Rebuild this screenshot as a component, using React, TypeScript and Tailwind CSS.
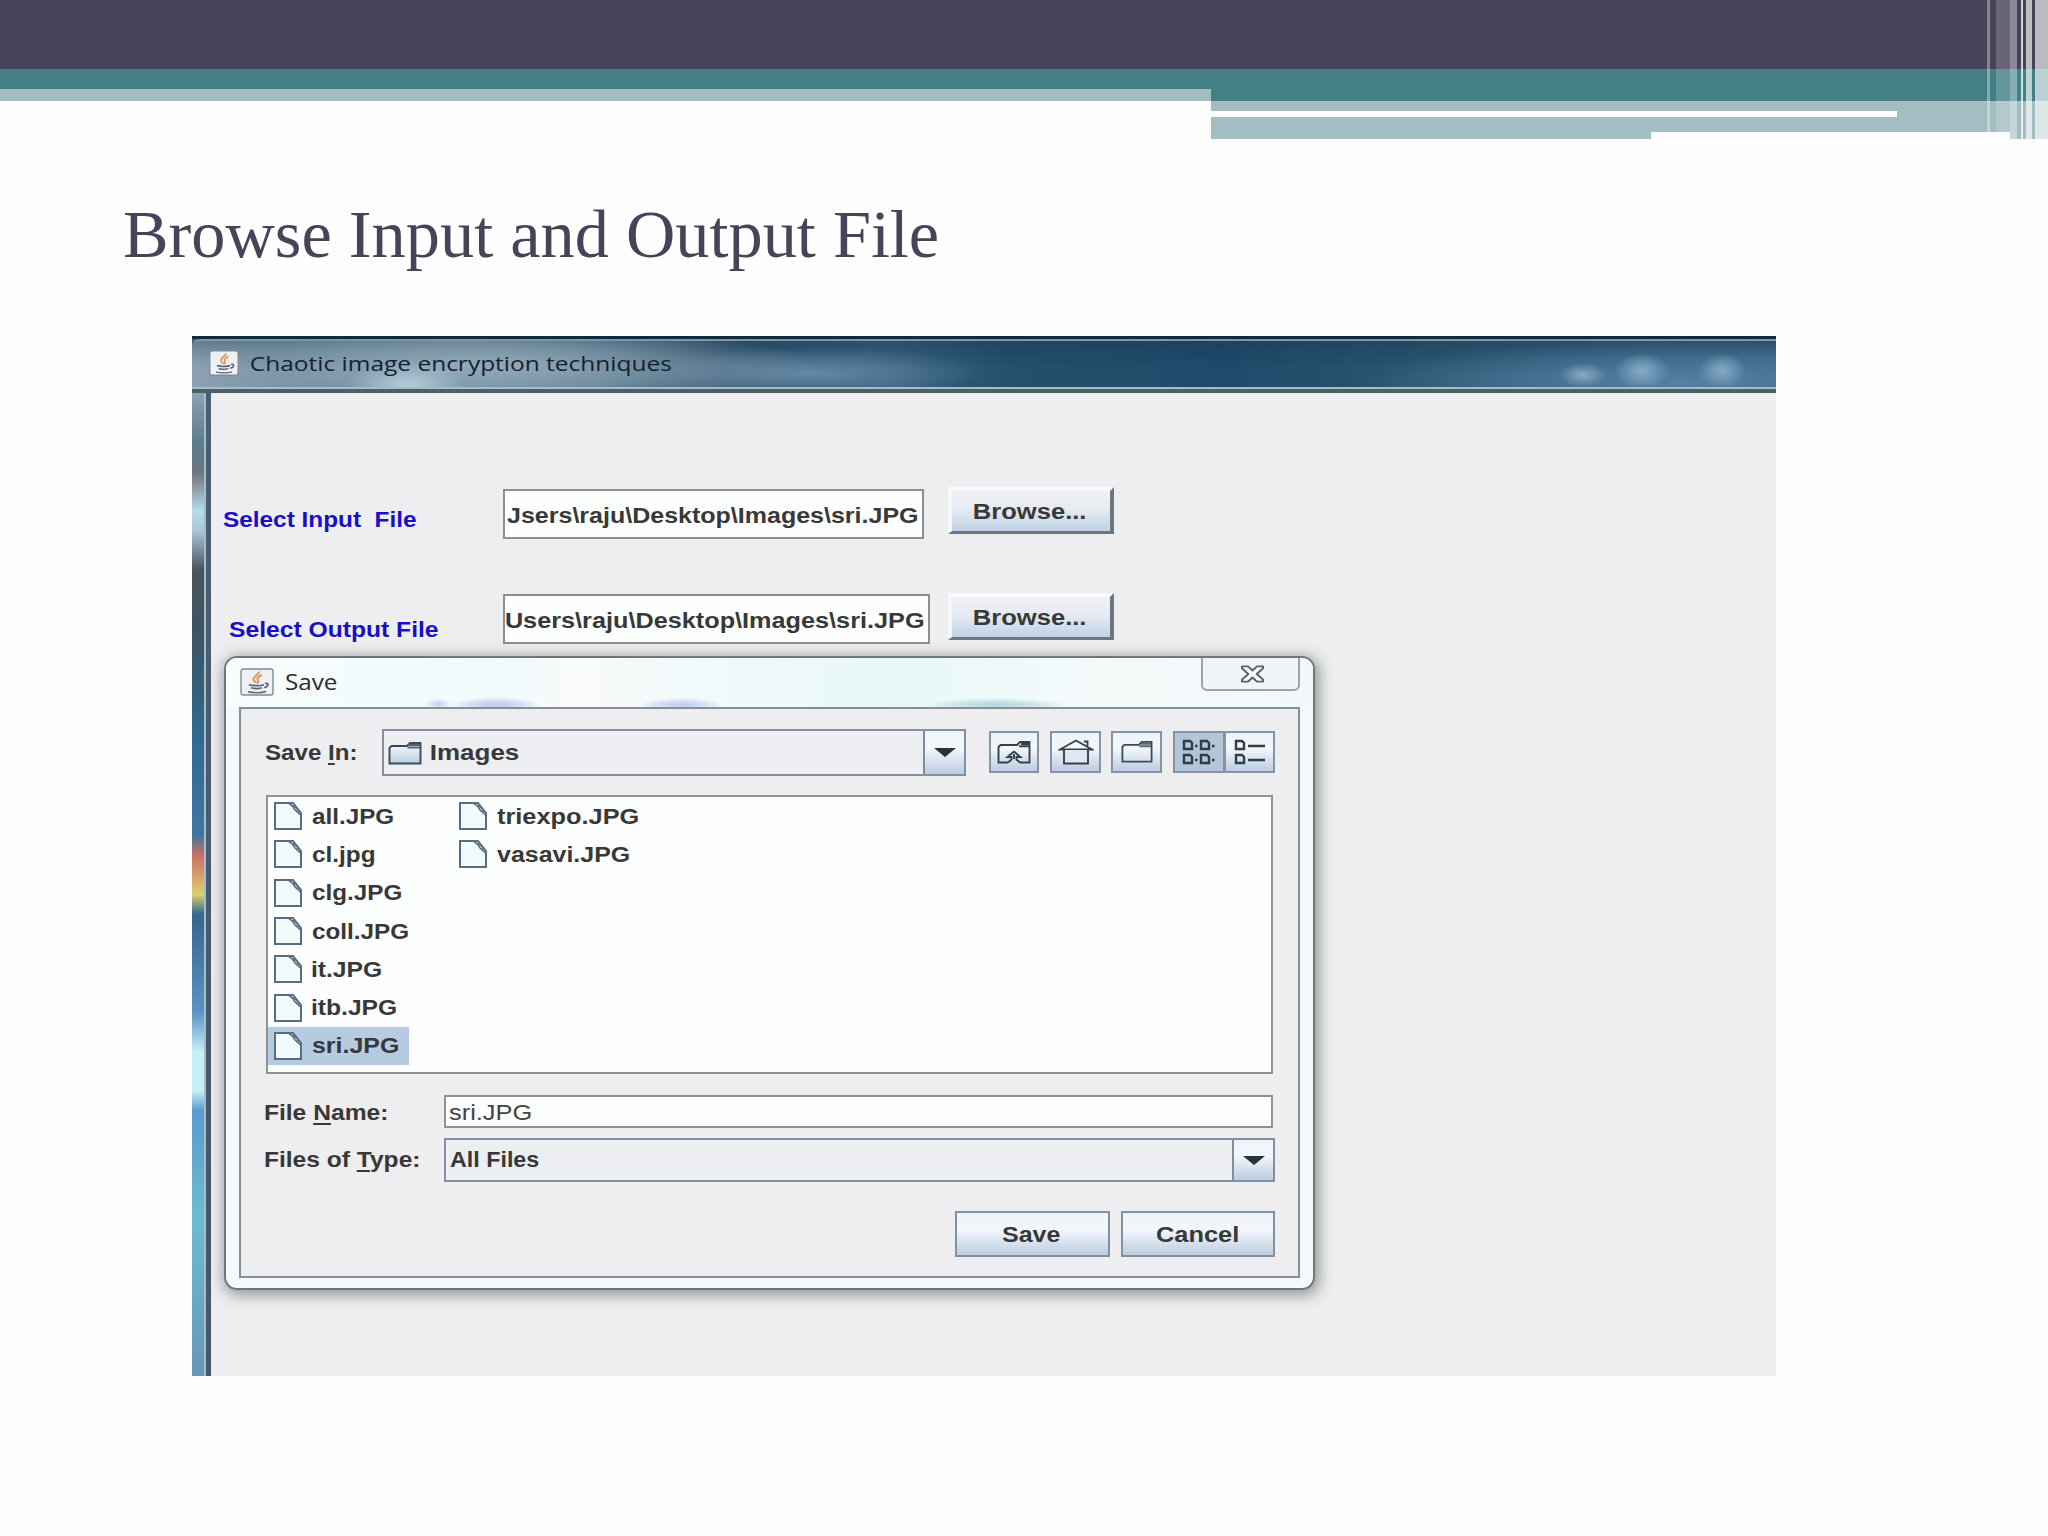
import { useLayoutEffect, useRef } from "react";
import type { ReactNode } from "react";

type FitProps = { text: string; w: number; className?: string; mnemonic?: number };

/** One line of text whose glyphs are stretched to span exactly `w` pixels. */
function Fit({ text, w, className = "", mnemonic = -1 }: FitProps) {
  const ref = useRef<HTMLSpanElement>(null);
  useLayoutEffect(() => {
    const el = ref.current;
    const ctx = document.createElement("canvas").getContext("2d");
    if (!el || !ctx) return;
    const cs = getComputedStyle(el);
    ctx.font = `${cs.fontWeight} ${cs.fontSize} ${cs.fontFamily}`;
    const m = ctx.measureText(text);
    const left = -m.actualBoundingBoxLeft;
    const ink = m.actualBoundingBoxRight - left;
    const s = w / ink;
    el.style.transform = `translateX(${-left * s}px) scaleX(${s})`;
  }, [text, w]);
  return (
    <span className={`block shrink-0 whitespace-pre ${className}`} style={{ width: w }}>
      <span ref={ref} className="inline-block origin-left">
        {mnemonic < 0 ? (
          text
        ) : (
          <>
            {text.slice(0, mnemonic)}
            <span className="underline decoration-2 underline-offset-[3px]">{text[mnemonic]}</span>
            {text.slice(mnemonic + 1)}
          </>
        )}
      </span>
    </span>
  );
}

function JavaIcon({ className }: { className: string }) {
  return (
    <svg className={className} viewBox="0 0 34 28" preserveAspectRatio="none" fill="none">
      <rect x="1" y="1" width="32" height="26" rx="2.5" fill="#eef1f3" stroke="#7d8b93" strokeWidth="1.4" />
      <path d="M19 3.5c1 3-6 4.600-5.500 8 .2 1.500 2.500 2.500 2.500 3.800M22 7c-3 1.200-5.500 3-4.200 5.200.8 1.400.6 2-.6 3" stroke="#dd9a5c" strokeWidth="2" />
      <path d="M9 16.800c3 1.200 12 1.200 15 0M11 19.800c3 1 8.500 1 11 0M25 15.500c4-1 4 3-.8 4.200" stroke="#5d5f74" strokeWidth="1.700" />
      <path d="M8 23.800c5 1.200 14 1.200 18-.3" stroke="#5a6a78" strokeWidth="1.500" />
    </svg>
  );
}

function FileIcon() {
  return (
    <svg className="h-7 w-7 shrink-0" viewBox="0 0 28 28" fill="none">
      <path d="M1 1h18l8 10v16H1z" fill="#f1fafd" stroke="#5a6d80" strokeWidth="2" />
      <path d="M15 1.500l3.500 2.500 2.500 4 5.500 5" stroke="#5a6d80" strokeWidth="1.600" />
      <path d="M19 3l2 5 5 2z" fill="#b9c8d3" stroke="#5a6d80" />
    </svg>
  );
}

function FolderIcon({ className, filled = false }: { className: string; filled?: boolean }) {
  return (
    <svg className={className} viewBox="0 0 34 23" preserveAspectRatio="none" fill="none">
      <defs>
        <linearGradient id="folder" x1="0" y1="0" x2="0" y2="1">
          <stop offset="0" stopColor="#f8fbfe" />
          <stop offset="1" stopColor="#b9cde0" />
        </linearGradient>
      </defs>
      <path d="M1.500 6l2-2H19l3-3h10.500v20.500H1.500z" fill={filled ? "url(#folder)" : "none"} stroke="#3c4a57" strokeWidth="1.900" />
      <path d="M19.500 5.500H32M21 3h11" stroke="#55636f" strokeWidth="1.900" />
    </svg>
  );
}

function UpFolderIcon() {
  return (
    <svg className="h-[23px] w-[34px]" viewBox="0 0 34 23" fill="none" stroke="#34424e" strokeWidth="1.900">
      <path d="M11 21.500H1.500V6l2-2H20l3-3h9.500v20.500H23M22 5.200h10M24 3h8" />
      <path d="M17 10.500l-6.500 5.500h4v2.500l-3.500 3M17 10.500l6.500 5.500h-4v2.500l3.500 3" />
      <path d="M17 13v5" />
    </svg>
  );
}

function HomeIcon() {
  return (
    <svg className="h-[26px] w-[36px]" viewBox="0 0 36 26" fill="none" stroke="#34424e" strokeWidth="1.900">
      <path d="M2 10.500L18 1.500l16 9zM26 2.500h3.500V7" />
      <path d="M6 11v13.500h24V11" fill="#dfe8f1" />
    </svg>
  );
}

function GridIcon() {
  return (
    <svg className="h-[27px] w-[34px]" viewBox="0 0 34 27" fill="none" stroke="#2f3d49" strokeWidth="2.400">
      <path d="M2 2h6l2 2v6H2zM19 2h6l2 2v6h-8zM2 16h6l2 2v6H2zM19 16h6l2 2v6h-8z" />
      <path d="M13 7h2.500M30 7h2.500M13 21h2.500M30 21h2.500" />
    </svg>
  );
}

function ListIcon() {
  return (
    <svg className="h-[27px] w-[32px]" viewBox="0 0 32 27" fill="none" stroke="#2f3d49" strokeWidth="2.400">
      <path d="M2 2h6l2 2v6H2zM2 16h6l2 2v6H2zM14 7h17M14 21h17" />
    </svg>
  );
}

function ToolButton({ children, className = "" }: { children: ReactNode; className?: string }) {
  return (
    <div className={`flex h-[42px] items-center justify-center border-2 border-[#8593a6] ${className}`}>{children}</div>
  );
}

const METAL = "bg-linear-to-b from-[#eef3f8] via-[#f3f7fb] via-40% to-[#bccde0]";

function Arrow({ className = "" }: { className?: string }) {
  return (
    <div className={`flex items-center justify-center border-l-2 border-[#7f8da2] ${METAL} ${className}`}>
      <svg className="h-[9px] w-[22px]" viewBox="0 0 22 10" preserveAspectRatio="none">
        <path d="M0 0h22L11 10z" fill="#26323c" />
      </svg>
    </div>
  );
}

function BrowseButton({ className = "" }: { className?: string }) {
  return (
    <div
      className={`h-[47px] w-[166px] border-t-4 border-r-4 border-b-3 border-l-4 border-t-[#f9fafb] border-r-[#6b7680] border-b-[#6b7680] border-l-[#f5f7f9] bg-linear-to-b from-[#f0f1f4] via-[#e6ebf2] via-45% to-[#bfd2e5] pl-[22px] ${className}`}
    >
      <Fit text="Browse..." w={111} className="leading-[41px]" />
    </div>
  );
}

function FileRow({ name, w, selected = false }: { name: string; w: number; selected?: boolean }) {
  return (
    <div className={`flex h-[38.3px] items-center gap-[10px] pl-1.5 ${selected ? "w-[141px] bg-[#b6cae2]" : ""}`}>
      <FileIcon />
      <Fit text={name} w={w} className="pt-px leading-[36px]" />
    </div>
  );
}

const FILES: [string, number][] = [
  ["all.JPG", 81],
  ["cl.jpg", 62],
  ["clg.JPG", 89],
  ["coll.JPG", 96],
  ["it.JPG", 69],
  ["itb.JPG", 84],
  ["sri.JPG", 86],
];

function SlideBanner() {
  return (
    <header className="relative h-[139px] w-full overflow-hidden bg-[#fefefe]">
      <div className="h-[69px] bg-[#464459]" />
      <div className="flex h-[70px]">
        <div className="w-[1211px]">
          <div className="h-5 bg-[#438086]" />
          <div className="h-3 bg-[#a3bec2]" />
        </div>
        <div className="flex-1 bg-[#a3bec2]">
          <div className="h-8 bg-[#438086]" />
          <div className="mt-2.5 h-1.5 w-[686px] bg-white" />
          <div className="mt-[15px] ml-[440px] h-[7px] w-[359px] bg-white" />
        </div>
      </div>
      <div className="absolute inset-y-0 right-0 flex">
        <div className="mr-[6px] h-full w-[3px] bg-white/35" />
        <div className="h-full w-[14px] bg-white/18" />
        <div className="mr-[4px] h-full w-[7px] bg-white/37" />
        <div className="mr-[3px] h-full w-[2px] bg-white/75" />
        <div className="mr-[3px] h-full w-[6px] bg-white/65" />
        <div className="h-full w-[13px] bg-white/64" />
      </div>
    </header>
  );
}

function SaveDialog() {
  return (
    <div className="absolute top-[656px] left-[224px] h-[634px] w-[1091px] rounded-[13px] border-2 border-[#6f7878] bg-[#f3fafb] font-['Liberation_Sans',Arial,sans-serif] text-[22px] font-bold text-[#383838] shadow-[2px_3px_14px_3px_rgba(70,80,80,0.5)]">
      <div className="flex h-[49px] overflow-hidden rounded-t-[11px] bg-[radial-gradient(14px_6px_at_212px_46px,#c5d0f1,transparent),radial-gradient(45px_8px_at_270px_47px,#b9c8ee,#b9c8ee80_60%,transparent),radial-gradient(42px_7px_at_455px_47px,#bccbef,#bccbef80_60%,transparent),radial-gradient(70px_7px_at_770px_47px,#b5d4de,#b5d4de80_60%,transparent),linear-gradient(90deg,#f8fcfd,#f1fbfc_25%,#f9fafb_32%,#eef9fa_50%,#e8f8f8_62%,#f5fafb_80%,#f2f7fa)] pl-[14px]">
        <JavaIcon className="mt-[10px] h-[28px] w-[34px] shrink-0" />
        <Fit text="Save" w={51} className="ml-[12px] font-['Open_Sans',sans-serif] text-[22px] leading-[46px] font-normal text-[#2b2b2b]" />
        <div className="mr-[13px] ml-auto flex h-[33px] w-[99px] items-center justify-center rounded-b-md border-2 border-t-0 border-[#9aa5ab] bg-[#f0f5f8] pl-1">
          <svg className="h-[18px] w-[25px]" viewBox="0 0 25 19" preserveAspectRatio="none" fill="#fafafa" stroke="#5c5f66" strokeWidth="2" strokeLinejoin="round">
            <path d="M2 1.500h6l4.500 4.300L17 1.500h6v2L16.700 9.500l6.300 6v2h-6l-4.500-4.300L8 17.500H2v-2l6.300-6L2 3.500z" />
          </svg>
        </div>
      </div>
      <div className="mx-[13px] h-[571px] border-2 border-[#858f94] bg-[#eeeef0]">
        <div className="mt-5 flex h-[47px] pl-[24px]">
          <Fit text="Save In:" w={91} mnemonic={5} className="leading-[48px]" />
          <div className="ml-[26px] flex h-[47px] w-[584px] border-2 border-[#8390a3] bg-[#eceef2]">
            <FolderIcon filled className="mt-[11px] ml-1 h-[23px] w-[34px]" />
            <Fit text="Images" w={88} className="ml-[9px] leading-[44px]" />
            <Arrow className="ml-auto w-[41px]" />
          </div>
          <ToolButton className={`mt-0.5 ml-[23px] w-[50px] ${METAL}`}>
            <UpFolderIcon />
          </ToolButton>
          <ToolButton className={`mt-0.5 ml-[11px] w-[51px] ${METAL}`}>
            <HomeIcon />
          </ToolButton>
          <ToolButton className={`mt-0.5 ml-[10px] w-[51px] ${METAL}`}>
            <FolderIcon className="h-[22px] w-[32px]" />
          </ToolButton>
          <ToolButton className="mt-0.5 ml-[11px] w-[52px] bg-[#b4c5d8]">
            <GridIcon />
          </ToolButton>
          <ToolButton className={`mt-0.5 -ml-px w-[51px] ${METAL}`}>
            <ListIcon />
          </ToolButton>
        </div>
        <div className="mt-[19px] ml-[25px] flex h-[279px] w-[1007px] border-2 border-[#8b9598] bg-[#fdfefe]">
          <div className="flex w-[185px] flex-col">
            {FILES.map(([name, w]) => (
              <FileRow key={name} name={name} w={w} selected={name === "sri.JPG"} />
            ))}
          </div>
          <div className="flex flex-col">
            <FileRow name="triexpo.JPG" w={141} />
            <FileRow name="vasavi.JPG" w={132} />
          </div>
        </div>
        <div className="mt-[21px] ml-[24px] flex h-[33px]">
          <Fit text="File Name:" w={122} mnemonic={5} className="leading-[36px]" />
          <div className="ml-[57px] w-[829px] border-2 border-[#8b9598] bg-[#fdfefe] pl-[3px]">
            <Fit text="sri.JPG" w={82} className="leading-[32px] font-normal text-[#444]" />
          </div>
        </div>
        <div className="mt-[10px] ml-[24px] flex h-[44px]">
          <Fit text="Files of Type:" w={154} mnemonic={9} className="leading-[44px]" />
          <div className="ml-[25px] flex w-[831px] border-2 border-[#8390a3] bg-[#eceef2] pl-[4px]">
            <Fit text="All Files" w={89} className="leading-[40px]" />
            <Arrow className="ml-auto w-[41px]" />
          </div>
        </div>
        <div className="mt-[29px] mr-[23px] flex justify-end gap-[11px]">
          <div className={`flex h-[46px] w-[155px] border-2 border-[#8390a3] pl-[45px] ${METAL}`}>
            <Fit text="Save" w={58} className="leading-[44px]" />
          </div>
          <div className={`flex h-[46px] w-[154px] border-2 border-[#8390a3] pl-[33px] ${METAL}`}>
            <Fit text="Cancel" w={82} className="leading-[44px]" />
          </div>
        </div>
      </div>
    </div>
  );
}

function AppWindow() {
  return (
    <section className="ml-[192px] flex h-[1040px] w-[1584px] flex-col bg-[#eeeef0] font-['Liberation_Sans',Arial,sans-serif] text-[22.500px] font-bold text-[#383838]">
      <div className="h-[57px] border-t-[3px] border-[#122a3c] bg-[#4c6068]">
        <div className="flex h-[50px] rounded-tl-lg border-y-2 border-t-[#7c97aa] border-b-[#a5bccb] bg-[radial-gradient(60px_24px_at_215px_44px,#b3cddc,transparent),radial-gradient(330px_44px_at_290px_26px,#94aaba,#8da5b5a0_50%,transparent),radial-gradient(170px_26px_at_620px_32px,#6488a6,#5e829f90_50%,transparent),radial-gradient(24px_12px_at_1391px_34px,#86aac6,transparent),radial-gradient(28px_18px_at_1450px_30px,#86aac6,#86aac6a0_40%,transparent),radial-gradient(24px_18px_at_1530px_30px,#86aac6,#86aac6a0_40%,transparent),radial-gradient(320px_44px_at_1490px_42px,#5580a3,#5580a380_55%,transparent),linear-gradient(180deg,#10304850,transparent_60%),linear-gradient(90deg,#8ca2b4,#6f8c9f_6%,#58788e_20%,#2f526d_34%,#36607f_44%,#24506a_52%,#1f4a6a_65%,#2a566f_78%,#365f7f)] pl-[17px]">
          <JavaIcon className="mt-[9px] h-[26px] w-[30px] shrink-0" />
          <Fit text="Chaotic image encryption techniques" w={420} className="ml-[12px] font-['Open_Sans',sans-serif] text-[20.500px] leading-[44px] font-normal text-[#14222e]" />
        </div>
      </div>
      <div className="flex flex-1">
        <div className="w-3 bg-[linear-gradient(180deg,#8ba3b4,#5d7c90_5%,#6b7580_8%,#848a92_9%,#b5dbee_12%,#a9c6d8_14%,#4a545e_18%,#3d5460_24%,#33607a_30%,#2f6c96_36%,#3f76a0_45%,#c86f66_47%,#dca76d_49.500%,#d9cf6f_51%,#35678f_53%,#5b93c4_63%,#c5eef7_67%,#c5eef7_71%,#5a9bd0_73%,#6bbcd0_84%,#6796bb)]" />
        <div className="w-0.5 bg-[#a5bccb]" />
        <div className="w-[5px] bg-linear-to-b from-[#4a5f6e] to-[#46586a]" />
        <div className="flex-1">
          <div className="mt-[94px] flex h-[52px]">
            <Fit text="Select Input  File" w={193} className="ml-[12px] leading-[66px] text-[#1a0fc4]" />
            <div className="mt-0.5 ml-[87px] h-[50px] w-[421px] border-2 border-[#8b8f94] bg-[#fdfefe] pl-[2px]">
              <Fit text="Jsers\raju\Desktop\Images\sri.JPG" w={411} className="leading-[50px]" />
            </div>
            <BrowseButton className="ml-[24px]" />
          </div>
          <div className="mt-[54px] flex h-[52px]">
            <Fit text="Select Output File" w={209} className="ml-[18px] leading-[73px] text-[#1a0fc4]" />
            <div className="mt-px ml-[65px] h-[50px] w-[427px] border-2 border-[#8b8f94] bg-[#fdfefe] pl-px">
              <Fit text="Users\raju\Desktop\Images\sri.JPG" w={418} className="leading-[50px]" />
            </div>
            <BrowseButton className="ml-[18px]" />
          </div>
        </div>
      </div>
    </section>
  );
}

export default function App() {
  return (
    <main className="relative h-[1536px] w-[2048px] overflow-hidden bg-[#fefefe]">
      <SlideBanner />
      <h1 className="h-[197px] pt-[57px] pl-[124px] font-['Liberation_Serif',serif] text-[68px] leading-[76px] text-[#464459]">
        <Fit text="Browse Input and Output File" w={813} />
      </h1>
      <AppWindow />
      <SaveDialog />
    </main>
  );
}
